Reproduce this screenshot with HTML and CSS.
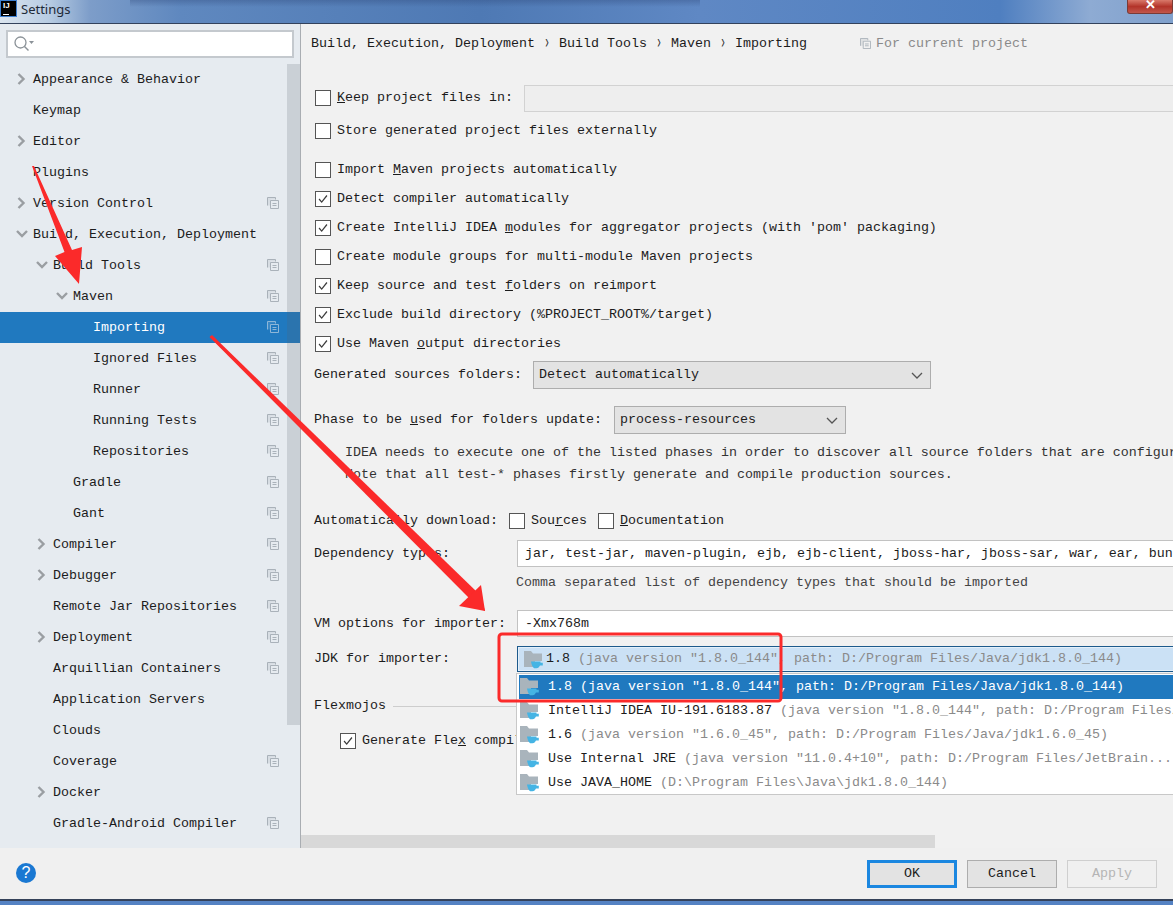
FILE: index.html
```html
<!DOCTYPE html>
<html lang="en">
<head>
<meta charset="utf-8">
<title>Settings</title>
<link rel="stylesheet" href="styles.css">
</head>
<body>
<svg class="sprites" width="0" height="0">
  <symbol id="copy" viewBox="0 0 12 12"><path d="M.5 8.5V.5h8v2" fill="none" stroke="currentColor"/><path d="M3.5 3.5h8v8h-8z" fill="none" stroke="currentColor"/><path d="M5.5 6.5h4M5.5 8.5h4" stroke="currentColor"/><path d="M.5.5h8v2h-5v6h-3z" fill="currentColor" opacity=".25"/></symbol>
  <symbol id="right" viewBox="0 0 9 12"><path d="M1.5 1l5 5-5 5" fill="none" stroke="currentColor" stroke-width="2.4"/></symbol>
  <symbol id="down" viewBox="0 0 12 8"><path d="M1 1l5 5 5-5" fill="none" stroke="currentColor" stroke-width="2.4"/></symbol>
  <symbol id="check" viewBox="0 0 16 16"><path d="M3.5 8l3 3.5 6-7.5" fill="none" stroke="#3c3c3c" stroke-width="1.4"/></symbol>
  <symbol id="jdk" viewBox="0 0 20 20"><path d="M0 1h7l2 2.500h9V11H11v6H0z" fill="#a9b4bc"/><path d="M7 11.500h9.500v1.300h2.300v2.700h-2.800c-.8 1.600-1.800 2.800-3.500 2.800h-1.500C9 18.300 7.600 15 7 11.500z" fill="#45b4e4"/></symbol>
  <symbol id="chev" viewBox="0 0 12 8"><path d="M1 1l5 5 5-5" fill="none" stroke="#555" stroke-width="1.300"/></symbol>
</svg>

<header class="titlebar">
  <div class="logo"><span>IJ</span><i></i></div>
  <div class="title">Settings</div>
  <div class="close">✕</div>
</header>

<div class="main">
  <aside class="sidebar">
    <div class="searchwrap">
      <div class="search">
        <svg class="search-ic" width="20" height="16" viewBox="0 0 20 16"><circle cx="6.500" cy="6.500" r="5.500" fill="none" stroke="#8b9298" stroke-width="1.300"/><path d="M10.500 10.500l4 4" stroke="#8b9298" stroke-width="1.500"/><path d="M15 5h5l-2.500 3z" fill="#8b9298"/></svg>
      </div>
    </div>
    <nav class="tree">
      <div class="node l0"><svg class="tw tw-r"><use href="#right"/></svg>Appearance &amp; Behavior</div>
      <div class="node l0">Keymap</div>
      <div class="node l0"><svg class="tw tw-r"><use href="#right"/></svg>Editor</div>
      <div class="node l0">Plugins</div>
      <div class="node l0"><svg class="tw tw-r"><use href="#right"/></svg>Version Control<svg class="cp"><use href="#copy"/></svg></div>
      <div class="node l0"><svg class="tw tw-d"><use href="#down"/></svg>Build, Execution, Deployment</div>
      <div class="node l1"><svg class="tw tw-d"><use href="#down"/></svg>Build Tools<svg class="cp"><use href="#copy"/></svg></div>
      <div class="node l2"><svg class="tw tw-d"><use href="#down"/></svg>Maven<svg class="cp"><use href="#copy"/></svg></div>
      <div class="node l3 sel">Importing<svg class="cp"><use href="#copy"/></svg></div>
      <div class="node l3">Ignored Files<svg class="cp"><use href="#copy"/></svg></div>
      <div class="node l3">Runner<svg class="cp"><use href="#copy"/></svg></div>
      <div class="node l3">Running Tests<svg class="cp"><use href="#copy"/></svg></div>
      <div class="node l3">Repositories<svg class="cp"><use href="#copy"/></svg></div>
      <div class="node l2">Gradle<svg class="cp"><use href="#copy"/></svg></div>
      <div class="node l2">Gant<svg class="cp"><use href="#copy"/></svg></div>
      <div class="node l1"><svg class="tw tw-r"><use href="#right"/></svg>Compiler<svg class="cp"><use href="#copy"/></svg></div>
      <div class="node l1"><svg class="tw tw-r"><use href="#right"/></svg>Debugger<svg class="cp"><use href="#copy"/></svg></div>
      <div class="node l1">Remote Jar Repositories<svg class="cp"><use href="#copy"/></svg></div>
      <div class="node l1"><svg class="tw tw-r"><use href="#right"/></svg>Deployment<svg class="cp"><use href="#copy"/></svg></div>
      <div class="node l1">Arquillian Containers<svg class="cp"><use href="#copy"/></svg></div>
      <div class="node l1">Application Servers</div>
      <div class="node l1">Clouds</div>
      <div class="node l1">Coverage<svg class="cp"><use href="#copy"/></svg></div>
      <div class="node l1"><svg class="tw tw-r"><use href="#right"/></svg>Docker</div>
      <div class="node l1">Gradle-Android Compiler<svg class="cp"><use href="#copy"/></svg></div>
    </nav>
    <div class="vthumb"></div>
  </aside>

  <section class="panel">
    <div class="content">
      <div class="crumbs">
        <span>Build, Execution, Deployment</span><b>❭</b><span>Build Tools</span><b>❭</b><span>Maven</span><b>❭</b><span>Importing</span>
        <span class="scope"><svg class="cp scope-ic"><use href="#copy"/></svg>For current project</span>
      </div>

      <div class="row r-keep"><span class="cb"></span><label><u>K</u>eep project files in:</label><div class="field field-off"></div></div>
      <div class="row r-check r-store"><span class="cb"></span><label>Store generated project files externally</label></div>

      <div class="row r-check r-first"><span class="cb"></span><label>Import <u>M</u>aven projects automatically</label></div>
      <div class="row r-check"><span class="cb"><svg><use href="#check"/></svg></span><label>Detect compiler automatically</label></div>
      <div class="row r-check"><span class="cb"><svg><use href="#check"/></svg></span><label>Create IntelliJ IDEA <u>m</u>odules for aggregator projects (with 'pom' packaging)</label></div>
      <div class="row r-check"><span class="cb"></span><label>Create module <u>g</u>roups for multi-module Maven projects</label></div>
      <div class="row r-check"><span class="cb"><svg><use href="#check"/></svg></span><label>Keep source and test <u>f</u>olders on reimport</label></div>
      <div class="row r-check"><span class="cb"><svg><use href="#check"/></svg></span><label>Exclude build directory (%PROJECT_ROOT%/target)</label></div>
      <div class="row r-check"><span class="cb"><svg><use href="#check"/></svg></span><label>Use Maven <u>o</u>utput directories</label></div>

      <div class="row r-gen"><span class="txt">Generated sources folders:</span><div class="combo combo-gen">Detect automatically<svg class="chev"><use href="#chev"/></svg></div></div>
      <div class="row r-phase"><span class="txt">Phase to be <u>u</u>sed for folders update:</span><div class="combo combo-phase">process-resources<svg class="chev"><use href="#chev"/></svg></div></div>

      <p class="note">IDEA needs to execute one of the listed phases in order to discover all source folders that are configured<br>Note that all test-* phases firstly generate and compile production sources.</p>

      <div class="row r-auto"><span class="txt">Automatically download:</span><span class="cb cb-a"></span><label>Sou<u>r</u>ces</label><span class="cb cb-b"></span><label><u>D</u>ocumentation</label></div>
      <div class="row r-dep"><span class="txt key">Dependency types:</span><div class="field">jar, test-jar, maven-plugin, ejb, ejb-client, jboss-har, jboss-sar, war, ear, bundle</div></div>
      <div class="hint">Comma separated list of dependency types that should be imported</div>
      <div class="row r-vm"><span class="txt key">VM options for importer:</span><div class="field">-Xmx768m</div></div>
      <div class="row r-jdk"><span class="txt key">JDK for importer:</span>
        <div class="jdkcombo"><svg class="jdk jdk-c"><use href="#jdk"/></svg>1.8 <em>(java version "1.8.0_144", path: D:/Program Files/Java/jdk1.8.0_144)</em></div>
      </div>
      <div class="group"><span>Flexmojos</span><i></i></div>
      <div class="row r-flex"><span class="cb"><svg><use href="#check"/></svg></span><label>Generate Fle<u>x</u> compiler configuration</label></div>
    </div>

    <div class="popup">
      <div class="opt opt-sel"><svg class="jdk"><use href="#jdk"/></svg>1.8 <em>(java version "1.8.0_144", path: D:/Program Files/Java/jdk1.8.0_144)</em></div>
      <div class="opt"><svg class="jdk"><use href="#jdk"/></svg>IntelliJ IDEA IU-191.6183.87 <em>(java version "1.8.0_144", path: D:/Program Files/Java/jdk1.8.0_144)</em></div>
      <div class="opt"><svg class="jdk"><use href="#jdk"/></svg>1.6 <em>(java version "1.6.0_45", path: D:/Program Files/Java/jdk1.6.0_45)</em></div>
      <div class="opt"><svg class="jdk"><use href="#jdk"/></svg>Use Internal JRE <em>(java version "11.0.4+10", path: D:/Program Files/JetBrain...</em></div>
      <div class="opt"><svg class="jdk"><use href="#jdk"/></svg>Use JAVA_HOME <em>(D:\Program Files\Java\jdk1.8.0_144)</em></div>
    </div>

    <div class="hscroll"><div class="hthumb"></div></div>
  </section>
</div>

<footer class="footer">
  <div class="help">?</div>
  <div class="buttons">
    <div class="btn btn-ok">OK</div>
    <div class="btn">Cancel</div>
    <div class="btn btn-off">Apply</div>
  </div>
</footer>
<div class="desk"></div>

<svg class="annot" width="1173" height="905" viewBox="0 0 1173 905">
  <path d="M32 166L64.500 252 55 256 79 284 82 247 72 250 34 166z" fill="#fb2a2a"/>
  <path d="M210 337L472 595 467 601 485 611 479 590 475 592 212 336z" fill="#fb2a2a"/>
  <path d="M209.500 337L470 599 477 592 212 335z" fill="#fb2a2a"/>
  <path d="M485 611L459 606 481 585z" fill="#fb2a2a"/>
  <rect x="499" y="634" width="282" height="67" rx="3" fill="none" stroke="#fb2a2a" stroke-width="3"/>
</svg>
</body>
</html>
```
FILE: styles.css
```css
* { box-sizing: border-box; }
html, body { margin: 0; height: 905px; overflow: hidden; }
body {
  display: flex;
  flex-direction: column;
  position: relative;
  font: 13.33px/18px "Liberation Mono", monospace;
  color: #1c1c1c;
  background: #f1f1f1;
}
.sprites { position: absolute; }

/* Title bar */
.titlebar {
  height: 24px;
  flex: none;
  display: flex;
  align-items: flex-start;
  border-bottom: 1px solid #33425c;
  background:
    linear-gradient(180deg, rgba(45, 70, 120, .35), rgba(45, 70, 120, 0) 7px) 130px 0 / 570px 100% no-repeat,
    linear-gradient(90deg, #dbe5ef 0, #b6cbe2 50px, #7d9dc9 90px, #5f88bf 180px, #4e79b4 480px, #5f88c4 700px, #4f7fc0 1000px, #8eabd3 1090px, #7fa0cc 1173px);
}
.logo {
  width: 15px; height: 15px;
  margin: 1px 0 0 1px;
  background: #000;
  color: #fff;
  position: relative;
  font: bold 8px/9px "Liberation Sans", sans-serif;
  padding-left: 2px;
  outline: 1px solid #3d7fd0;
  flex: none;
}
.logo span { display: block; }
.logo i { position: absolute; left: 2px; bottom: 1px; width: 6px; height: 1px; background: #fff; }
.title {
  margin: 0 0 0 5px;
  font: 13px/18px "Noto Sans", sans-serif;
  color: #1e2a38;
}
.close {
  margin-left: auto;
  width: 46px; height: 14px;
  border: 1px solid #7a3b36;
  border-top: 0;
  border-radius: 0 0 3px 3px;
  background: linear-gradient(180deg, #d9796a, #b3342a 50%, #c2574b);
  color: #fff;
  text-align: center;
  font: bold 13px/9px "Liberation Sans", sans-serif;
}

/* Body */
.main { flex: 1; display: flex; min-height: 0; }
.sidebar {
  width: 301px;
  flex: none;
  position: relative;
  overflow: hidden;
  background: #e6ebf0;
  border-right: 1px solid #a9adb2;
}
.searchwrap { height: 40px; padding: 6px 6px 0; }
.search {
  height: 28px;
  width: 288px;
  background: #fff;
  border: 2px solid #c4c9ce;
  padding: 4px 0 0 6px;
}
.search-ic { display: block; }
.node {
  height: 31px;
  line-height: 31px;
  position: relative;
  white-space: nowrap;
}
.l0 { padding-left: 33px; }
.l1 { padding-left: 53px; }
.l2 { padding-left: 73px; }
.l3 { padding-left: 93px; }
.sel { background: #2079bf; color: #fff; }
.tw { position: absolute; color: #9a9ea2; }
.tw-r { width: 9px; height: 12px; top: 9px; margin-left: -16px; }
.tw-d { width: 12px; height: 8px; top: 11px; margin-left: -17px; }
.cp {
  position: absolute;
  left: 267px; top: 9px;
  width: 12px; height: 12px;
  color: #aab2ba;
}
.sel .cp { color: #8db6d8; }
.vthumb {
  position: absolute;
  left: 287px; top: 40px;
  width: 13px; height: 661px;
  background: rgba(90, 100, 110, .2);
}

/* Panel */
.panel {
  flex: 1;
  min-width: 0;
  display: flex;
  flex-direction: column;
  position: relative;
  overflow: hidden;
  background: #f1f1f1;
}
.content { flex: 1; min-height: 0; padding-left: 13px; overflow: hidden; }
.crumbs {
  height: 39px;
  margin-left: -3px;
  display: flex;
  align-items: center;
  white-space: nowrap;
}
.crumbs b { width: 24px; text-align: center; font-weight: normal; font-size: 10px; color: #333; }
.scope { margin-left: 53px; padding-left: 16px; position: relative; color: #8a8a8a; }
.scope-ic { left: 0; top: 3px; width: 11px; height: 11px; }

.row { display: flex; align-items: center; white-space: nowrap; }
.r-keep { height: 28px; margin-top: 21px; }
.r-check { height: 29px; }
.r-store { margin-top: 4px; }
.r-first { margin-top: 10px; }
.cb {
  width: 16px; height: 16px;
  flex: none;
  margin: 0 6px 0 1px;
  background: #fff;
  border: 1px solid #555;
}
.cb svg { display: block; width: 14px; height: 14px; }
.field {
  flex: none;
  width: 700px;
  height: 27px;
  line-height: 25px;
  padding-left: 7px;
  background: #fff;
  border: 1px solid #c2c2c2;
  border-right: 0;
}
.field-off { margin-left: 11px; height: 27px; background: #eee; border-color: #d2d2d2; }
.r-gen { height: 28px; margin-top: 3px; }
.r-phase { height: 28px; margin-top: 17px; }
.combo {
  height: 28px;
  line-height: 26px;
  padding-left: 5px;
  position: relative;
  background: #e3e3e3;
  border: 1px solid #adadad;
  flex: none;
}
.combo-gen { width: 398px; margin-left: 11px; }
.combo-phase { width: 232px; margin-left: 12px; }
.chev { position: absolute; right: 7px; top: 10px; width: 12px; height: 8px; }
.note { margin: 8px 0 0 31px; line-height: 22px; white-space: nowrap; color: #333; }
.r-auto { height: 26px; margin-top: 22px; }
.cb-a { margin-left: 11px; }
.cb-b { margin-left: 11px; }
.key { width: 203px; flex: none; }
.r-dep { height: 27px; margin-top: 6px; }
.hint { margin: 5px 0 0 202px; line-height: 22px; color: #444; white-space: nowrap; }
.r-vm { height: 27px; margin-top: 16px; }
.r-jdk { height: 26px; margin-top: 9px; }
.jdkcombo {
  width: 700px; height: 26px;
  line-height: 24px;
  flex: none;
  padding-left: 28px;
  position: relative;
  background: #cbe1f5;
  border: 1px solid #1d5a8c;
  box-shadow: inset 0 0 0 1px #e4f0fa;
}
.jdkcombo em, .opt em { font-style: normal; color: #8a8a8a; }
.jdk { position: absolute; left: 3px; top: 3px; width: 20px; height: 20px; }
.jdk-c { left: 6px; top: 3px; }
.group { display: flex; align-items: center; margin-top: 23px; height: 22px; }
.group i { flex: 1; height: 1px; margin-left: 7px; background: #cdcdcd; }
.r-flex { height: 24px; margin-top: 12px; padding-left: 25px; }

/* Popup */
.popup {
  position: absolute;
  left: 215px; top: 649px;
  width: 700px; height: 122px;
  padding: 1px 0 0 2px;
  background: #fff;
  border: 1px solid #c8c8c8;
  white-space: nowrap;
}
.opt { height: 24px; line-height: 24px; padding-left: 29px; position: relative; }
.opt .jdk { left: 1px; top: 2px; }
.opt-sel { background: #2079bf; color: #fff; }
.opt-sel em { color: #fff; }

.hscroll { height: 13px; flex: none; background: #f1f1f1; }
.hthumb { width: 634px; height: 13px; background: #d8d8d8; }

/* Footer */
.footer {
  height: 51px;
  flex: none;
  display: flex;
  justify-content: space-between;
  padding: 12px 16px 0 16px;
  background: #f0f0f0;
}
.help {
  width: 20px; height: 20px;
  margin-top: 3px;
  border-radius: 50%;
  background: #1a78d2;
  color: #fff;
  text-align: center;
  font: 16px/20px "Liberation Sans", sans-serif;
}
.buttons { display: flex; gap: 10px; }
.btn {
  width: 90px; height: 28px;
  line-height: 26px;
  text-align: center;
  background: #e3e3e3;
  border: 1px solid #adadad;
}
.btn-ok { border: 3px solid #1b87e0; line-height: 22px; }
.btn-off { background: #f0f0f0; border-color: #cfcfcf; color: #b5b5b5; }
.desk { height: 6px; flex: none; background: #5582c3; border-top: 2px solid #35425a; }

.annot { position: absolute; left: 0; top: 0; pointer-events: none; }
```
